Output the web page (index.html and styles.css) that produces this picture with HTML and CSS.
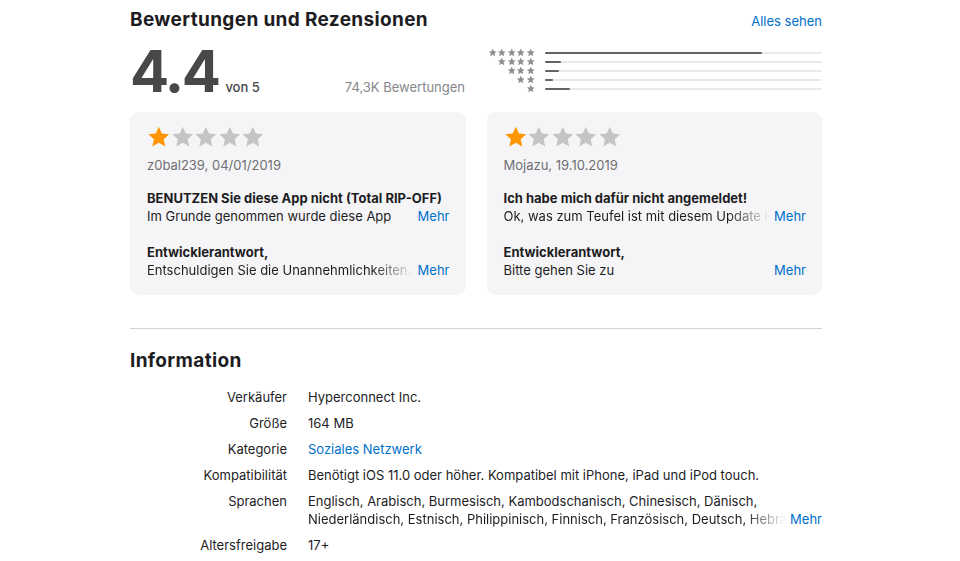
FILE: index.html
```html
<!DOCTYPE html>
<html lang="de">
<head>
<meta charset="utf-8">
<title>Bewertungen und Rezensionen</title>
<link rel="stylesheet" href="styles.css">
</head>
<body>
<svg class="defs" aria-hidden="true">
  <symbol id="star" viewBox="0 0 24 24">
    <path d="M12 1.6l3.1 6.9 7.4.8-5.5 5 1.6 7.4L12 17.9l-6.6 3.8L7 14.3 1.5 9.3l7.4-.8z"/>
  </symbol>
</svg>
<main class="page">
  <section class="ratings">
    <header class="section-head">
      <h2 class="section-title">Bewertungen und Rezensionen</h2>
      <a class="link see-all" href="#">Alles sehen</a>
    </header>
    <div class="summary">
      <div class="score">
        <span class="score-num">4.4</span>
        <span class="score-of">von 5</span>
        <span class="score-count">74,3K Bewertungen</span>
      </div>
      <div class="histogram">
        <div class="hist-row">
          <span class="hist-stars"><svg><use href="#star"/></svg><svg><use href="#star"/></svg><svg><use href="#star"/></svg><svg><use href="#star"/></svg><svg><use href="#star"/></svg></span>
          <span class="hist-bar"><span class="hist-fill" style="width:78.3%"></span></span>
        </div>
        <div class="hist-row">
          <span class="hist-stars"><svg><use href="#star"/></svg><svg><use href="#star"/></svg><svg><use href="#star"/></svg><svg><use href="#star"/></svg></span>
          <span class="hist-bar"><span class="hist-fill" style="width:5.8%"></span></span>
        </div>
        <div class="hist-row">
          <span class="hist-stars"><svg><use href="#star"/></svg><svg><use href="#star"/></svg><svg><use href="#star"/></svg></span>
          <span class="hist-bar"><span class="hist-fill" style="width:5.1%"></span></span>
        </div>
        <div class="hist-row">
          <span class="hist-stars"><svg><use href="#star"/></svg><svg><use href="#star"/></svg></span>
          <span class="hist-bar"><span class="hist-fill" style="width:2.9%"></span></span>
        </div>
        <div class="hist-row">
          <span class="hist-stars"><svg><use href="#star"/></svg></span>
          <span class="hist-bar"><span class="hist-fill" style="width:9.1%"></span></span>
        </div>
      </div>
    </div>

    <div class="reviews">
      <article class="review">
        <div class="review-stars">
          <svg class="on"><use href="#star"/></svg><svg><use href="#star"/></svg><svg><use href="#star"/></svg><svg><use href="#star"/></svg><svg><use href="#star"/></svg>
        </div>
        <p class="review-meta">z0bal239, 04/01/2019</p>
        <h3 class="review-title">BENUTZEN Sie diese App nicht (Total RIP-OFF)</h3>
        <div class="clamp-row">
          <span class="clamp-text">Im Grunde genommen wurde diese App</span>
          <a class="link more" href="#">Mehr</a>
        </div>
        <h4 class="dev-title">Entwicklerantwort,</h4>
        <div class="clamp-row">
          <span class="clamp-text fade">Entschuldigen Sie die Unannehmlichkeiten. Bi</span>
          <a class="link more" href="#">Mehr</a>
        </div>
      </article>
      <article class="review">
        <div class="review-stars">
          <svg class="on"><use href="#star"/></svg><svg><use href="#star"/></svg><svg><use href="#star"/></svg><svg><use href="#star"/></svg><svg><use href="#star"/></svg>
        </div>
        <p class="review-meta">Mojazu, 19.10.2019</p>
        <h3 class="review-title">Ich habe mich dafür nicht angemeldet!</h3>
        <div class="clamp-row">
          <span class="clamp-text fade">Ok, was zum Teufel ist mit diesem Update los</span>
          <a class="link more" href="#">Mehr</a>
        </div>
        <h4 class="dev-title">Entwicklerantwort,</h4>
        <div class="clamp-row">
          <span class="clamp-text">Bitte gehen Sie zu</span>
          <a class="link more" href="#">Mehr</a>
        </div>
      </article>
    </div>
  </section>

  <section class="info">
    <h2 class="section-title">Information</h2>
    <dl class="info-list">
      <dt>Verkäufer</dt>
      <dd>Hyperconnect Inc.</dd>
      <dt>Größe</dt>
      <dd>164 MB</dd>
      <dt>Kategorie</dt>
      <dd><a class="link" href="#">Soziales Netzwerk</a></dd>
      <dt>Kompatibilität</dt>
      <dd>Benötigt iOS 11.0 oder höher. Kompatibel mit iPhone, iPad und iPod touch.</dd>
      <dt>Sprachen</dt>
      <dd>
        <div>Englisch, Arabisch, Burmesisch, Kambodschanisch, Chinesisch, Dänisch,</div>
        <div class="clamp-row">
          <span class="clamp-text fade">Niederländisch, Estnisch, Philippinisch, Finnisch, Französisch, Deutsch, Hebräisch</span>
          <a class="link more" href="#">Mehr</a>
        </div>
      </dd>
      <dt>Altersfreigabe</dt>
      <dd>17+</dd>
    </dl>
  </section>
</main>
</body>
</html>
```

FILE: styles.css
```css
* {
  box-sizing: border-box;
  margin: 0;
  padding: 0;
}

body {
  font-family: Inter, "Liberation Sans", Arial, sans-serif;
  font-size: 13px;
  line-height: 18px;
  color: #1d1d1f;
  background: #fff;
  -webkit-font-smoothing: antialiased;
}

.defs {
  width: 0;
  height: 0;
  overflow: hidden;
  display: block;
}

.page {
  width: 692px;
  margin-left: 130px;
  padding-top: 8px;
}

.link {
  color: #0070c9;
  text-decoration: none;
}

.section-head {
  display: flex;
  justify-content: space-between;
  align-items: baseline;
}

.section-title {
  font-size: 19px;
  line-height: 24px;
  font-weight: 700;
  letter-spacing: 0.35px;
}

.see-all {
  font-size: 13px;
}

/* summary */
.summary {
  display: flex;
  justify-content: space-between;
  margin-top: 13px;
}

.score {
  width: 335px;
  display: flex;
  align-items: baseline;
}

.score-num {
  font-size: 58px;
  line-height: 52px;
  font-weight: 700;
  color: #48484a;
  letter-spacing: -2.5px;
}

.score-of {
  margin-left: 7px;
  font-weight: 500;
  color: #48484a;
}

.score-count {
  margin-left: auto;
  color: #86868b;
}

.histogram {
  width: 335px;
  margin-top: 3px;
  display: flex;
  flex-direction: column;
}

.hist-row {
  height: 9px;
  display: flex;
  align-items: center;
  gap: 10px;
}

.hist-stars {
  width: 48px;
  display: flex;
  justify-content: flex-end;
  fill: #8e8e93;
}

.hist-stars svg {
  width: 9.5px;
  height: 9px;
}

.hist-bar {
  flex: 1;
  height: 2px;
  background: #e8e8ed;
  border-radius: 1px;
  display: flex;
}

.hist-fill {
  height: 2px;
  background: #636366;
  border-radius: 1px;
}

/* reviews */
.reviews {
  display: grid;
  grid-template-columns: repeat(2, minmax(0, 1fr));
  column-gap: 21px;
  margin-top: 15px;
}

.review {
  min-width: 0;
  background: #f5f5f7;
  border-radius: 9px;
  padding: 13px 16px 16px 17px;
}

.review-stars {
  display: flex;
  height: 24px;
  fill: #c4c4c6;
}

.review-stars svg {
  width: 23.6px;
  height: 24px;
}

.review-stars svg.on {
  fill: #ff9500;
}

.review-meta {
  margin-top: 7px;
  color: #6e6e73;
}

.review-title {
  margin-top: 15px;
  font-size: 13px;
  font-weight: 700;
}

.dev-title {
  margin-top: 18px;
  font-size: 13px;
  font-weight: 700;
}

.clamp-row {
  display: flex;
  align-items: baseline;
}

.clamp-text {
  flex: 1;
  min-width: 0;
  overflow: hidden;
  white-space: nowrap;
}

.clamp-text.fade {
  -webkit-mask-image: linear-gradient(to right, #000 calc(100% - 42px), transparent);
  mask-image: linear-gradient(to right, #000 calc(100% - 42px), transparent);
}

.more {
  margin-left: 4px;
  flex: none;
}

/* information */
.info {
  margin-top: 33px;
  border-top: 1px solid #d2d2d7;
  padding-top: 20px;
}

.info-list {
  margin-top: 15px;
  display: grid;
  grid-template-columns: 157px minmax(0, 1fr);
  column-gap: 21px;
  row-gap: 8px;
}

.info-list dt {
  text-align: right;
  color: #1d1d1f;
}

.info-list dd {
  min-width: 0;
}
```
